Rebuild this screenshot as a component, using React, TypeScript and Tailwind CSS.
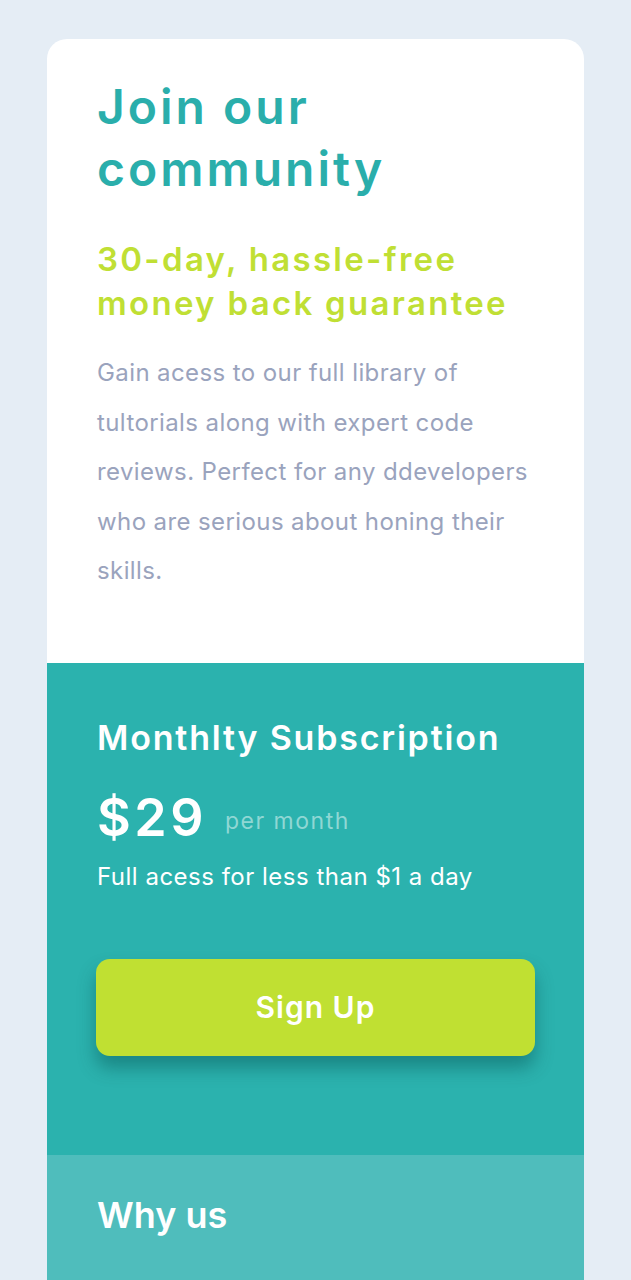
export default function App() {
  return (
    <div
      className="min-h-[1280px] bg-[#e5edf5] pt-[39px]"
      style={{ fontFamily: "Inter, 'Noto Sans', sans-serif" }}
    >
      <div className="mx-[47px] overflow-hidden rounded-t-[20px]">
        {/* intro */}
        <section className="bg-white px-[50px] pt-[37px] pb-[67px]">
          <h1 className="text-[48px] leading-[62px] font-semibold tracking-[3px] text-[#2aaeab]">
            Join our community
          </h1>
          <h2 className="mt-[37px] text-[33px] leading-[44px] font-semibold tracking-[2.3px] text-[#c0df34]">
            30-day, hassle-free money back guarantee
          </h2>
          <p className="mt-[23px] text-[24px] leading-[49.5px] tracking-[0.4px] text-[#9aa3bd]">
            Gain acess to our full library of tultorials along with expert code
            reviews. Perfect for any ddevelopers who are serious about honing
            their skills.
          </p>
        </section>

        {/* subscription */}
        <section className="bg-[#2bb2ae] px-[50px] pt-[53px] pb-[99px] text-white">
          <h3 className="text-[34px] leading-[44px] font-semibold tracking-[1.8px]">
            Monthlty Subscription
          </h3>
          <div className="mt-[28px] flex h-[60px] items-start gap-[18px]">
            <span className="text-[52px] leading-[60px] font-semibold tracking-[3.5px]">
              $29
            </span>
            <span className="mt-[18px] text-[23px] leading-[30px] tracking-[1.5px] text-[#8fd7d4]">
              per month
            </span>
          </div>
          <p className="mt-[12px] text-[24px] leading-[34px] tracking-[0.5px]">
            Full acess for less than $1 a day
          </p>
          <button className="-mx-px mt-[65px] flex h-[97px] w-[calc(100%+2px)] items-center justify-center rounded-[14px] bg-[#c0e032] text-[30px] font-semibold tracking-[1px] text-white shadow-[0_12px_18px_rgba(0,70,70,0.4)]">
            Sign Up
          </button>
        </section>

        {/* why us */}
        <section className="bg-[#4fbdbc] px-[50px] pt-[38px] pb-[100px] text-white">
          <h3 className="text-[36px] leading-[44px] font-semibold">Why us</h3>
        </section>
      </div>
    </div>
  );
}
